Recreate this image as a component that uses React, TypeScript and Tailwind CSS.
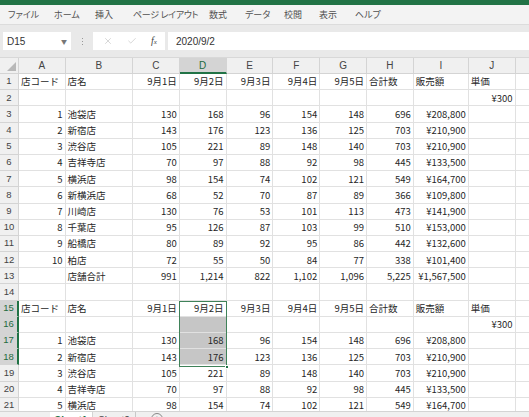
import React from "react";
import { X, Check } from "lucide-react";

const COLS = ["A", "B", "C", "D", "E", "F", "G", "H", "I", "J"];

const header = ["店コード", "店名", "9月1日", "9月2日", "9月3日", "9月4日", "9月5日", "合計数", "販売額", "単価"];
const unit = ["", "", "", "", "", "", "", "", "", "¥300"];
const empty = ["", "", "", "", "", "", "", "", "", ""];

const shops: string[][] = [
  ["1", "池袋店", "130", "168", "96", "154", "148", "696", "¥208,800", ""],
  ["2", "新宿店", "143", "176", "123", "136", "125", "703", "¥210,900", ""],
  ["3", "渋谷店", "105", "221", "89", "148", "140", "703", "¥210,900", ""],
  ["4", "吉祥寺店", "70", "97", "88", "92", "98", "445", "¥133,500", ""],
  ["5", "横浜店", "98", "154", "74", "102", "121", "549", "¥164,700", ""],
  ["6", "新横浜店", "68", "52", "70", "87", "89", "366", "¥109,800", ""],
  ["7", "川崎店", "130", "76", "53", "101", "113", "473", "¥141,900", ""],
  ["8", "千葉店", "95", "126", "87", "103", "99", "510", "¥153,000", ""],
  ["9", "船橋店", "80", "89", "92", "95", "86", "442", "¥132,600", ""],
  ["10", "柏店", "72", "55", "50", "84", "77", "338", "¥101,400", ""],
];
const total = ["", "店舗合計", "991", "1,214", "822", "1,102", "1,096", "5,225", "¥1,567,500", ""];

const rows: string[][] = [header, unit, ...shops, total, empty, header, unit, ...shops.slice(0, 5)];

const tabs = [
  { label: "ファイル", w: "w-[46px]" },
  { label: "ホーム", w: "w-[41px]" },
  { label: "挿入", w: "w-[38px]" },
  { label: "ページ レイアウト", w: "w-[76px]" },
  { label: "数式", w: "w-[36px]" },
  { label: "データ", w: "w-[39px]" },
  { label: "校閲", w: "w-[35px]" },
  { label: "表示", w: "w-[36px]" },
  { label: "ヘルプ", w: "w-[40px]" },
];

const selRows = [15, 16, 17, 18];

export default function App() {
  return (
    <div className="h-[417px] w-[529px] overflow-hidden bg-white font-['Noto_Sans_CJK_JP',sans-serif] flex flex-col">
      {/* title strip */}
      <div className="h-[5px] shrink-0 bg-[#217346]" />

      {/* ribbon tabs */}
      <div className="h-[20px] shrink-0 bg-[#f3f3f3] border-b border-[#dcdcdc] flex items-center pl-[8px] text-[9px] text-[#505050] [font-feature-settings:'palt']">
        {tabs.map((t) => (
          <div key={t.label} className={`${t.w} shrink-0 whitespace-pre ${t.label.length > 6 ? "tracking-[-0.3px]" : ""}`}>
            {t.label}
          </div>
        ))}
      </div>

      {/* formula bar */}
      <div className="h-[32px] shrink-0 bg-[#e9e9e9] flex items-start pt-[7px] pl-[3px]">
        <div className="w-[68px] h-[18px] bg-white flex items-center justify-between pl-[4px] pr-[4px]">
          <span className="text-[10px] text-[#333] font-['Liberation_Sans',sans-serif]">D15</span>
          <span className="text-[6px] text-[#777]">▼</span>
        </div>
        <div className="w-[22px] h-[18px] flex flex-col items-center justify-center gap-[2px]">
          <span className="w-[1px] h-[1px] bg-[#999]" />
          <span className="w-[1px] h-[1px] bg-[#999]" />
          <span className="w-[1px] h-[1px] bg-[#999]" />
        </div>
        <div className="w-[72px] h-[18px] bg-white flex items-center pl-[10px] gap-[14px]">
          <X size={10} strokeWidth={1.3} className="text-[#b5b5b5]" />
          <Check size={10} strokeWidth={1.3} className="text-[#b5b5b5]" />
          <span className="text-[10px] italic text-[#444] font-['Liberation_Serif',serif] leading-none">
            f<span className="text-[7px]">x</span>
          </span>
        </div>
        <div className="ml-[3px] flex-1 h-[18px] bg-white flex items-center pl-[8px]">
          <span className="text-[10px] text-[#333] font-['Liberation_Sans',sans-serif]">2020/9/2</span>
        </div>
      </div>

      {/* sheet grid */}
      <div className="relative h-[354px] shrink-0 overflow-hidden border-t border-[#d8d8d8]">
        <div className="grid grid-cols-[19px_46.5px_67.5px_46.8px_46.8px_46.8px_46.8px_46.8px_46.8px_55px_46.8px_1fr] grid-rows-[16px_repeat(21,16.2px)] text-[9.5px] text-[#262626]">
          {/* corner */}
          <div className="relative bg-[#f0f0f0] border-r border-b border-[#d4d4d4]">
            <svg className="absolute right-[2px] bottom-[2px]" width="9" height="9" viewBox="0 0 9 9">
              <polygon points="9,0 9,9 0,9" fill="#b8b8b8" />
            </svg>
          </div>
          {COLS.map((c) => (
            <div
              key={c}
              className={`flex items-center justify-center text-[10px] font-['Liberation_Sans',sans-serif] border-r border-[#d4d4d4] ${
                c === "D"
                  ? "bg-[#d4d4d4] text-[#1e6b3f] border-b-2 border-b-[#217346]"
                  : "bg-[#f0f0f0] text-[#444] border-b border-b-[#d4d4d4]"
              }`}
            >
              {c}
            </div>
          ))}
          <div className="bg-[#f0f0f0] border-b border-[#d4d4d4]" />

          {rows.map((row, ri) => {
            const n = ri + 1;
            const sel = selRows.includes(n);
            return (
              <React.Fragment key={n}>
                <div
                  className={`flex items-center justify-center text-[9.5px] font-['Liberation_Sans',sans-serif] border-b border-[#d4d4d4] ${
                    sel
                      ? "bg-[#d4d4d4] text-[#1e6b3f] border-r-2 border-r-[#217346]"
                      : "bg-[#f0f0f0] text-[#444] border-r border-r-[#d4d4d4]"
                  }`}
                >
                  {n}
                </div>
                {row.map((v, ci) => {
                  const right = /^[0-9¥]/.test(v);
                  const shaded = ci === 3 && n >= 16 && n <= 18;
                  return (
                    <div
                      key={ci}
                      className={`flex items-center overflow-visible whitespace-nowrap px-[2px] border-r border-b border-[#e1e1e1] ${
                        right ? "justify-end" : "justify-start"
                      } ${shaded ? "bg-[#c6c6c6]" : ""}`}
                    >
                      {v}
                    </div>
                  );
                })}
                <div className="border-b border-[#e1e1e1]" />
              </React.Fragment>
            );
          })}
        </div>

        {/* selection D15:D18 */}
        <div className="absolute left-[178.8px] top-[242.6px] w-[48.6px] h-[66.4px] border-[1.5px] border-[#3f8259] pointer-events-none">
          <div className="absolute right-[-3px] bottom-[-3px] w-[4px] h-[4px] bg-[#217346] border border-white" />
        </div>
      </div>

      {/* sheet tabs */}
      <div className="h-[20px] shrink-0 bg-[#f0f0f0] border-t border-[#d4d4d4] flex items-start text-[10px] font-['Liberation_Sans',sans-serif]">
        <div className="w-[50px] flex items-center gap-[14px] pl-[13px] pt-[3px] text-[6px] text-[#aaa]">
          <span>◀</span>
          <span>▶</span>
        </div>
        <div className="w-[43px] h-[20px] bg-white flex justify-center pt-[1px] text-[#217346] font-bold border-r border-[#d4d4d4]">
          <span className="border-b-2 border-[#217346] h-[14px]">Sheet1</span>
        </div>
        <div className="w-[43px] h-[20px] flex justify-center pt-[1px] text-[#444] border-r border-[#c8c8c8]">
          Sheet2
        </div>
        <div className="ml-[15px] mt-[1px] w-[12px] h-[12px] rounded-full border border-[#888] flex items-center justify-center text-[9px] text-[#666] leading-none">
          +
        </div>
      </div>
    </div>
  );
}
